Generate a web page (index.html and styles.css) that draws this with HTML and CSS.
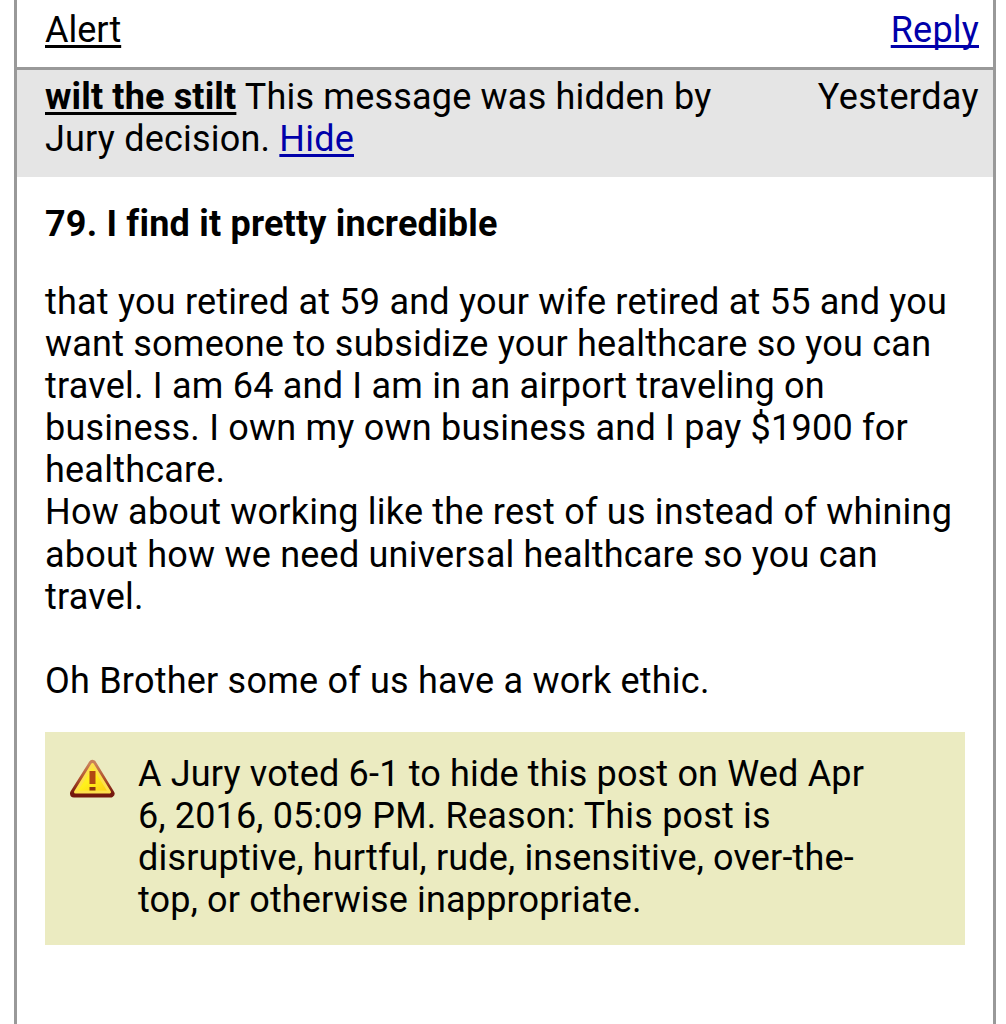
FILE: index.html
```html
<!DOCTYPE html>
<html lang="en">
<head>
    <meta charset="UTF-8">
    <meta name="viewport" content="width=device-width, initial-scale=1.0">
    <title>I find it pretty incredible</title>
    <link rel="stylesheet" href="styles.css">
</head>
<body>
    <div class="thread">
        <div class="post-actions">
            <a class="alert" href="#">Alert</a>
            <a href="#">Reply</a>
        </div>
        <div class="post-header">
            <div class="author-line">
                <a class="author" href="#">wilt the stilt</a> This message was hidden by<br>Jury decision. <a href="#">Hide</a>
            </div>
            <div class="date">Yesterday</div>
        </div>
        <div class="post">
            <h1>79. I find it pretty incredible</h1>
            <div class="message">
                that you retired at 59 and your wife retired at 55 and you<br>
                want someone to subsidize your healthcare so you can<br>
                travel. I am 64 and I am in an airport traveling on<br>
                business. I own my own business and I pay $1900 for<br>
                healthcare.<br>
                How about working like the rest of us instead of whining<br>
                about how we need universal healthcare so you can<br>
                travel.<br>
                <br>
                Oh Brother some of us have a work ethic.
            </div>
            <div class="jury">
                <svg class="warning" viewBox="0 0 48 40">
                    <defs>
                        <linearGradient id="edge" x1="0" y1="0" x2="0" y2="1">
                            <stop offset="0" stop-color="#c98058"/>
                            <stop offset="0.5" stop-color="#b0502c"/>
                            <stop offset="1" stop-color="#74180e"/>
                        </linearGradient>
                        <linearGradient id="fill" x1="0" y1="0" x2="1" y2="1">
                            <stop offset="0" stop-color="#ffe94a"/>
                            <stop offset="0.5" stop-color="#fff01c"/>
                            <stop offset="1" stop-color="#fcc810"/>
                        </linearGradient>
                    </defs>
                    <path d="M23.500 5 L41.500 34.500 H5 Z" fill="url(#edge)" stroke="url(#edge)" stroke-width="8" stroke-linejoin="round"/>
                    <path d="M23.500 5.500 L40.500 33 H6.500 Z" fill="url(#fill)" stroke="#fde04c" stroke-width="3" stroke-linejoin="round"/>
                    <path d="M20.500 12 H26.500 V25 H20.500 Z" fill="#b04812"/>
                    <rect x="20.500" y="28" width="6" height="3.500" fill="#8c3410"/>
                </svg>
                <div class="jury-text">
                    A Jury voted 6-1 to hide this post on Wed Apr<br>
                    6, 2016, 05:09 PM. Reason: This post is<br>
                    disruptive, hurtful, rude, insensitive, over-the-<br>
                    top, or otherwise inappropriate.
                </div>
            </div>
        </div>
    </div>
</body>
</html>
```

FILE: styles.css
```css
* {
    margin: 0;
    padding: 0;
    box-sizing: border-box;
}

body {
    background: #fff;
    color: #000;
    font-family: Roboto, sans-serif;
    font-size: 36px;
    line-height: 42px;
    letter-spacing: 0.2px;
}

a {
    color: #0000aa;
    text-decoration-thickness: 3px;
    text-decoration-skip-ink: none;
    text-underline-offset: 3px;
}

.thread {
    height: 1024px;
    margin: 0 10px 0 14px;
    border-left: 3px solid #999;
    border-right: 3px solid #999;
    overflow: hidden;
}

.post-actions {
    display: flex;
    justify-content: space-between;
    height: 70px;
    padding: 9px 14px 0 28px;
    border-bottom: 3px solid #999;
}

.alert,
.author {
    color: #000;
}

.alert {
    letter-spacing: 0;
}

.author {
    font-weight: bold;
    letter-spacing: 0.15px;
}

.post-header {
    display: flex;
    justify-content: space-between;
    height: 107px;
    padding: 6px 14px 0 28px;
    background: #e5e5e5;
}

.date {
    letter-spacing: 0.4px;
}

.post {
    padding: 26px 28px 0;
}

h1 {
    font-size: 36px;
    line-height: 42px;
    font-weight: bold;
}

.message {
    margin-top: 36px;
    line-height: 42.1px;
    letter-spacing: 0.22px;
    white-space: nowrap;
}

.jury {
    display: flex;
    height: 213px;
    margin-top: 30px;
    padding: 21px 24px;
    background: #ebebc1;
    letter-spacing: 0.17px;
    white-space: nowrap;
}

.warning {
    width: 48px;
    height: 40px;
    margin-top: 6px;
    margin-right: 21px;
}
```
